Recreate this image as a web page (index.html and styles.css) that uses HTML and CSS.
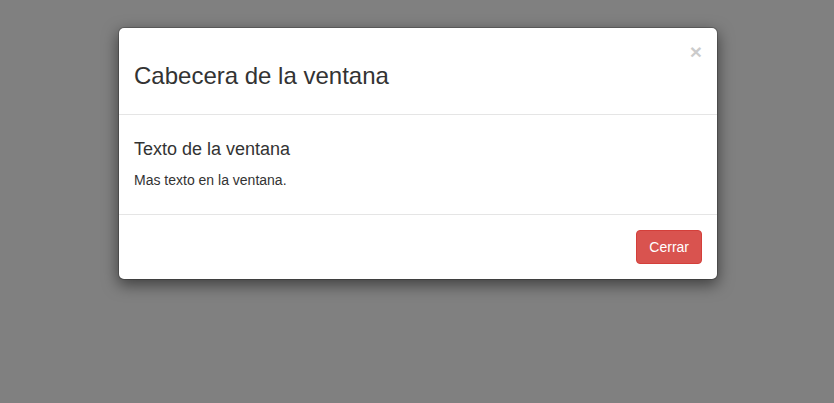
FILE: index.html
```html
<!DOCTYPE html>
<html lang="es">
<head>
<meta charset="utf-8">
<title>Modal</title>
<link rel="stylesheet" href="styles.css">
</head>
<body>
<div class="backdrop">
  <div class="modal-dialog">
    <div class="modal-content">
      <div class="modal-header">
        <button type="button" class="close" aria-label="Close">&times;</button>
        <h3 class="title">Cabecera de la ventana</h3>
      </div>
      <div class="modal-body">
        <h4 class="subtitle">Texto de la ventana</h4>
        <p class="text">Mas texto en la ventana.</p>
      </div>
      <div class="modal-footer">
        <button type="button" class="btn-danger">Cerrar</button>
      </div>
    </div>
  </div>
</div>
</body>
</html>
```
FILE: styles.css
```css
* { box-sizing: border-box; }
html, body { margin: 0; padding: 0; height: 100%; }
body {
  font-family: "Liberation Sans", Arial, Helvetica, sans-serif;
  font-size: 14px;
  line-height: 1.42857143;
  color: #333;
  background: #808080;
}
.backdrop {
  height: 100%;
  overflow: hidden;
  padding-top: 27px;
}
.modal-dialog {
  width: 600px;
  margin: 0 auto;
  position: relative;
  left: 1px;
}
.modal-content {
  background: #fff;
  border: 1px solid rgba(0,0,0,.2);
  border-radius: 6px;
  box-shadow: 0 5px 15px rgba(0,0,0,.5);
  background-clip: padding-box;
}
.modal-header {
  padding: 15px;
  border-bottom: 1px solid #e5e5e5;
}
.modal-header::after { content: ""; display: table; clear: both; }
.close {
  float: right;
  margin-top: -2px;
  padding: 0;
  border: 0;
  background: transparent;
  font-family: "Liberation Sans", Arial, sans-serif;
  font-size: 21px;
  font-weight: bold;
  line-height: 1;
  color: #000;
  text-shadow: 0 1px 0 #fff;
  opacity: .2;
  cursor: pointer;
}
.title {
  margin: 20px 0 10px;
  font-size: 24px;
  font-weight: 500;
  line-height: 1.1;
}
.modal-body {
  padding: 15px;
}
.subtitle {
  margin: 10px 0 10px;
  font-size: 18px;
  font-weight: 500;
  line-height: 1.1;
}
.text {
  margin: 0 0 9px;
}
.modal-footer {
  padding: 15px;
  text-align: right;
  border-top: 1px solid #e5e5e5;
}
.btn-danger {
  display: inline-block;
  padding: 6px 12px;
  font-family: "Liberation Sans", Arial, sans-serif;
  font-size: 14px;
  line-height: 1.42857143;
  color: #fff;
  background: #d9534f;
  border: 1px solid #d43f3a;
  border-radius: 4px;
  cursor: pointer;
}
```
